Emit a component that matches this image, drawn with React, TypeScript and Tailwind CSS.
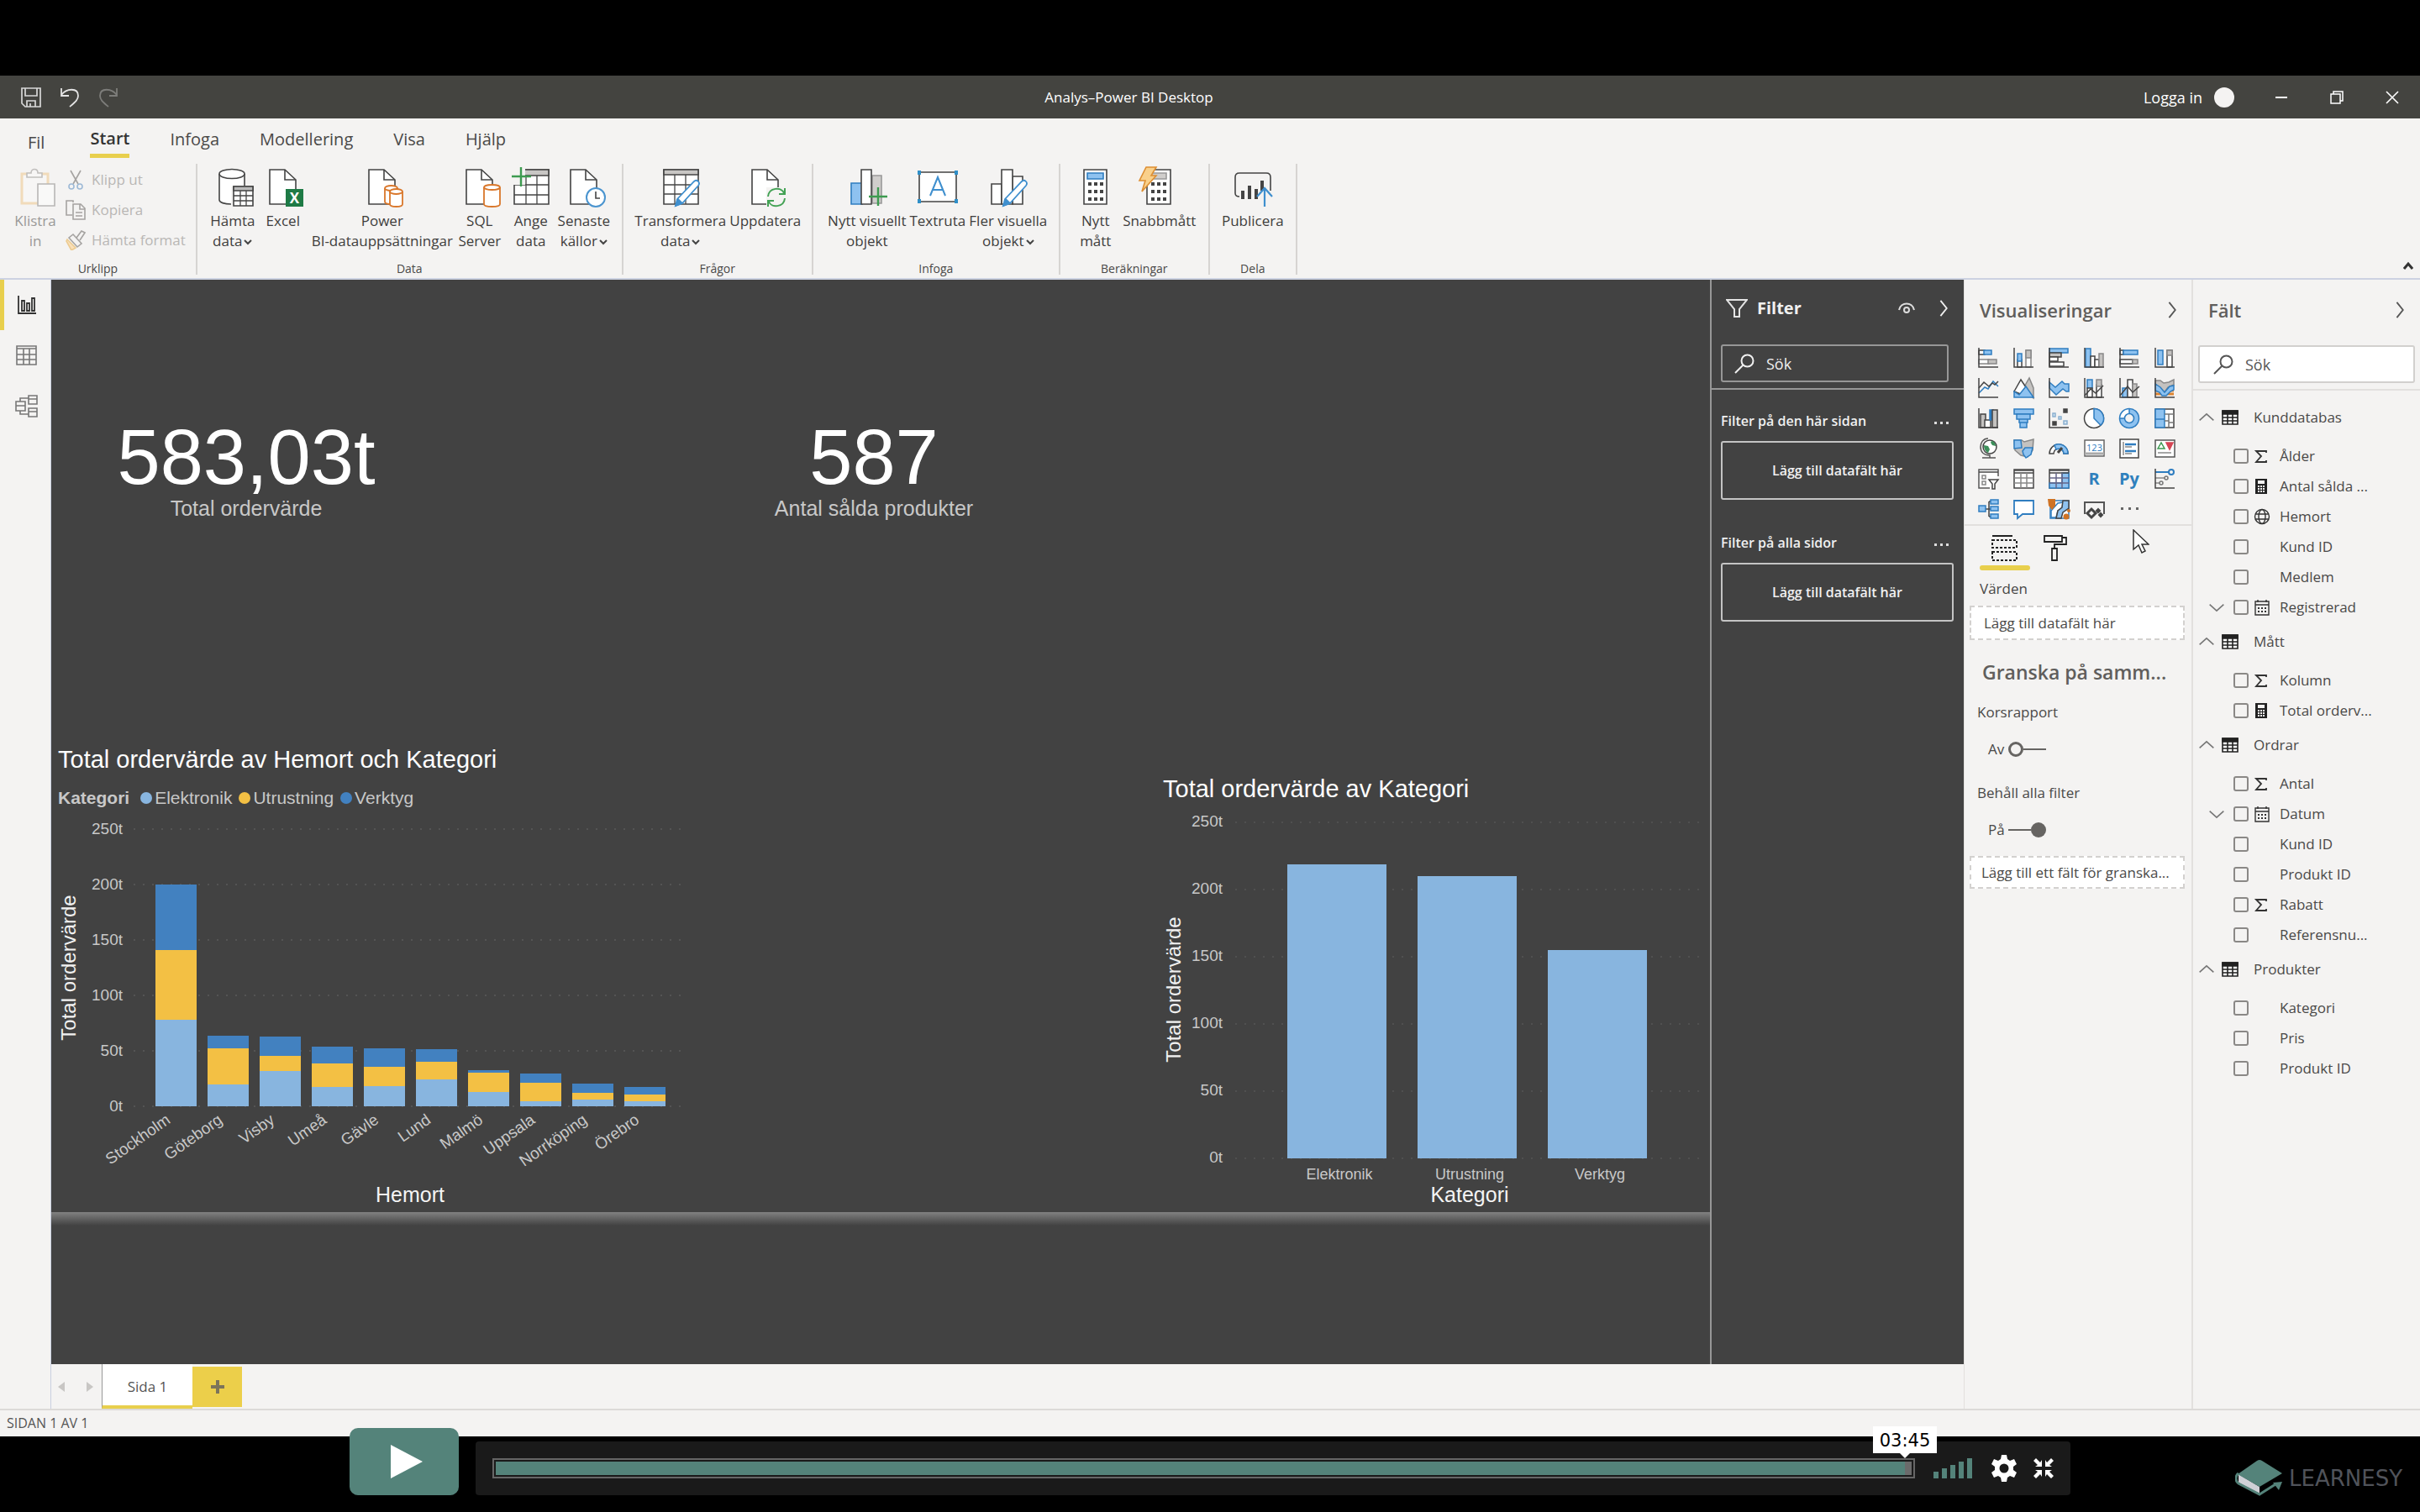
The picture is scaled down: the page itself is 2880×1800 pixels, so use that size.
import React from "react";
import type { ReactNode } from "react";

const INK = "#444444";
const BLUE = "#2f7dc0";
const SKY = "#8ec2f0";
const GREY = "#c4c2c0";

/* ---------- shared glyphs ---------- */

function Chevron({ dir, className }: { dir: "right" | "up" | "down"; className: string }) {
  const d = { right: "M7 2l8 10-8 10", up: "M2 16L12 7l10 9", down: "M2 8l10 9 10-9" }[dir];
  return (
    <svg viewBox="0 0 24 24" className={className} fill="none" stroke="currentColor" strokeWidth="2" aria-hidden="true">
      <path d={d} />
    </svg>
  );
}

function Caret() {
  return (
    <svg viewBox="0 0 10 10" className="ml-0.5 inline-block h-2.5 w-2.5" fill="none" stroke="#444" strokeWidth="2" aria-hidden="true">
      <path d="M1 3l4 4 4-4" />
    </svg>
  );
}

function SearchGlyph() {
  return (
    <svg viewBox="0 0 24 24" className="h-6 w-6 shrink-0" fill="none" stroke="currentColor" strokeWidth="2" aria-hidden="true">
      <circle cx="15.500" cy="8.500" r="7" />
      <path d="M10.500 13.500L1 23" />
    </svg>
  );
}

/* ---------- ribbon icons ---------- */

function Big({ children }: { children: ReactNode }) {
  return (
    <svg viewBox="0 0 48 48" className="h-12 w-12 overflow-visible" fill="none" stroke={INK} strokeWidth="1.6" aria-hidden="true">
      {children}
    </svg>
  );
}

const Doc = () => (
  <>
    <path d="M8 4h18l13 12v29H8z" fill="#fff" stroke={INK} />
    <path d="M26 4v12h13" />
  </>
);

const PasteIcon = () => (
  <Big>
    <path d="M8 9h31v35H8z" stroke="#f0c584" strokeWidth="3" fill="#fbfaf8" />
    <path d="M14 13V8h5c0-6 8-6 8 0h5v5z" stroke="#8f8d8b" fill="#fbfaf8" />
    <path d="M27 21h20v26H27z" stroke="#7f7d7b" fill="#fff" />
  </Big>
);

const GetDataIcon = () => (
  <Big>
    <path d="M8 9v31c0 3 6 5 14 5V24h16V9z" fill="#fff" stroke="none" />
    <path d="M8 9v31c0 3 6 5 14 5M38 9v14" />
    <ellipse cx="23" cy="9" rx="15" ry="5.500" fill="#fff" />
    <path d="M25 24h23v23H25z" fill="#fff" />
    <path d="M25 24h23v5H25z" fill="#bbb" />
    <path d="M25 35h23M25 41h23M33 29v18M40 29v18" strokeWidth="1.3" />
  </Big>
);

const ExcelIcon = () => (
  <Big>
    <Doc />
    <path d="M27 27h21v21H27z" fill="#1e7a45" stroke="none" />
    <text x="37.500" y="43.500" fill="#fff" stroke="none" fontSize="17" fontWeight="700" textAnchor="middle">X</text>
  </Big>
);

const Cyl = ({ x, y, w, h }: { x: number; y: number; w: number; h: number }) => (
  <g stroke="#d9772b" fill="#fff" strokeWidth="1.8">
    <path d={`M${x} ${y}v${h}c0 4 ${w} 4 ${w} 0v-${h}`} />
    <ellipse cx={x + w / 2} cy={y} rx={w / 2} ry="3" />
  </g>
);

const DatasetIcon = () => (
  <Big>
    <Doc />
    <Cyl x={27} y={26} w={15} h={16} />
    <Cyl x={33} y={30} w={15} h={15} />
  </Big>
);

const SqlIcon = () => (
  <Big>
    <Doc />
    <Cyl x={29} y={25} w={19} h={20} />
  </Big>
);

const EnterDataIcon = () => (
  <Big>
    <path d="M4 4h41v41H4z" fill="#fff" />
    <path d="M4 4h41v7H4z" fill="#c8c6c4" />
    <path d="M4 22h41M4 34h41M18 11v34M31 11v34" strokeWidth="1.3" />
    <path d="M-1 3h18v19H-1z" fill="#f4f3f2" stroke="none" />
    <path d="M1 12h23M12 1v23" stroke="#3d9b50" strokeWidth="2.400" />
  </Big>
);

const RecentIcon = () => (
  <Big>
    <Doc />
    <circle cx="38" cy="37" r="11" fill="#fff" stroke="#4a94cf" strokeWidth="2" />
    <path d="M38 30v8h5" />
  </Big>
);

const Pencil = () => (
  <g>
    <path d="M20 39L40 18c3-3 8 1 5 5L26 44l-8 3z" fill="#fff" stroke="#3f8fce" strokeWidth="1.800" />
    <path d="M18 47l3-8 5 5z" fill="#3f8fce" stroke="#3f8fce" />
  </g>
);

const TransformIcon = () => (
  <Big>
    <path d="M4 4h41v41H4z" fill="#fff" />
    <path d="M4 4h41v6H4z" fill="#c8c6c4" />
    <path d="M4 22h41M4 33h41M17 10v35M30 10v35" strokeWidth="1.3" />
    <Pencil />
  </Big>
);

const RefreshIcon = () => (
  <Big>
    <Doc />
    <rect x="25" y="25" width="23" height="23" fill="#f4f3f2" stroke="none" />
    <g stroke="#43a255" strokeWidth="2">
      <path d="M27 36c1-11 16-12 19-4M47 26v7h-7" />
      <path d="M47 38c-1 11-16 12-19 4M27 48v-7h7" />
    </g>
  </Big>
);

const NewVisualIcon = () => (
  <Big>
    <path d="M30 11h11v33H30z" fill="#d0cecc" stroke="#999" />
    <path d="M5 20h13v25H5z" fill={SKY} stroke={BLUE} />
    <path d="M17 4h12v41H17z" fill="#fff" />
    <path d="M26 36h22M37 25v22" stroke="#3d9b50" strokeWidth="2.400" />
  </Big>
);

const TextBoxIcon = () => (
  <Big>
    <path d="M2 7h44v35H2z" fill="#fff" />
    <g fill="#2f8fc8" stroke="none">
      <path d="M0 5h4v5H0zM44 5h4v5h-4zM0 39h4v5H0zM44 39h4v5h-4z" />
    </g>
    <path d="M15 35L24 13l9 22M18 28h12" stroke="#3f8fce" strokeWidth="2" />
  </Big>
);

const MoreVisualsIcon = () => (
  <Big>
    <path d="M29 12h12v33H29z" fill="#fff" />
    <path d="M4 21h12v24H4z" fill="#fff" />
    <path d="M16 4h13v41H16z" fill="#fff" />
    <Pencil />
  </Big>
);

const Keys = ({ x }: { x: number }) => (
  <g fill={INK} stroke="none">
    {[19, 28, 37].map((y) =>
      [0, 7, 14].map((dx) => <rect key={`${y}-${dx}`} x={x + dx} y={y} width="4" height="4" />)
    )}
  </g>
);

const MeasureIcon = () => (
  <Big>
    <path d="M10 4h27v41H10z" fill="#fff" />
    <path d="M14 8h19v7H14z" fill={SKY} stroke={BLUE} />
    <Keys x={15} />
  </Big>
);

const QuickMeasureIcon = () => (
  <Big>
    <path d="M9 4h28v41H9z" fill="#fff" />
    <path d="M14 8h18v7H14z" fill="#d0cecc" stroke="#999" />
    <Keys x={14} />
    <path d="M8 1h12l-6 10h6L3 30l4-13H0z" fill="#f9d08b" stroke="#dd8f33" />
  </Big>
);

const PublishIcon = () => (
  <Big>
    <path d="M8 36c-3 0-5-1-5-4V13c0-3 2-5 5-5h32c3 0 5 2 5 5v16" fill="none" />
    <path d="M12 29v10M20 23v16M28 27v12M35 17v12" strokeWidth="4" />
    <path d="M38 48V27M29 36l9-10 9 10" stroke="#3f8fce" strokeWidth="2.200" />
  </Big>
);

/* ---------- visualisation gallery ---------- */

const axes = <path d="M1 0v23h23" stroke={INK} />;

function Viz({ name, children }: { name: string; children: ReactNode }) {
  return (
    <button aria-label={name} className="flex h-6 w-6 items-center justify-center">
      <svg viewBox="0 0 24 24" className="h-6 w-6 overflow-visible" fill="none" stroke={INK} strokeWidth="1.5" aria-hidden="true">
        {children}
      </svg>
    </button>
  );
}

function VizGallery() {
  return (
    <div className="grid grid-cols-[repeat(6,24px)] gap-x-[18px] gap-y-3 px-4">
      <Viz name="Staplat liggande diagram">
        <path d="M1 3h7v5H1z" fill="#fff" /><path d="M7 3h9v5H7z" fill={SKY} stroke={BLUE} />
        <path d="M1 14h12v5H1z" fill="#fff" stroke="#888" /><path d="M12 14h10v5H12z" fill={GREY} stroke="#888" />{axes}
      </Viz>
      <Viz name="Staplat stapeldiagram">
        <path d="M5 14h5v9H5z" fill="#fff" /><path d="M5 7h5v9H5z" fill={SKY} stroke={BLUE} />
        <path d="M15 3h6v20h-6z" fill="#fff" stroke="#888" /><path d="M15 3h6v9h-6z" fill={GREY} stroke="#888" />{axes}
      </Viz>
      <Viz name="Grupperat liggande diagram">
        <path d="M1 1h22v5H1z" fill={SKY} stroke={BLUE} /><path d="M1 6h14v5H1z" fill={GREY} />
        <path d="M1 11h10v5H1z" fill="#fff" /><path d="M1 17h17v5H1z" fill="#fff" />{axes}
      </Viz>
      <Viz name="Grupperat stapeldiagram">
        <path d="M2 1h6v22H2z" fill={SKY} stroke={BLUE} /><path d="M8 10h5v13H8z" fill="#fff" />
        <path d="M13 14h5v9h-5z" fill="#fff" /><path d="M18 7h5v16h-5z" fill={GREY} stroke="#888" />{axes}
      </Viz>
      <Viz name="100 % staplat liggande diagram">
        <path d="M1 3h4v5H1z" fill="#fff" /><path d="M5 3h17v5H5z" fill={SKY} stroke={BLUE} />
        <path d="M1 14h15v5H1z" fill="#fff" /><path d="M16 14h6v5h-6z" fill={GREY} stroke="#888" />{axes}
      </Viz>
      <Viz name="100 % staplat stapeldiagram">
        <path d="M4 3h6v17H4z" fill={SKY} stroke={BLUE} /><path d="M15 3h6v20h-6z" fill="#fff" />
        <path d="M15 3h6v6h-6z" fill={GREY} stroke="#888" />{axes}
      </Viz>

      <Viz name="Linjediagram">
        <path d="M1 18l7-7 4 2 6-9 6 6" stroke={BLUE} /><path d="M1 12l6-7 6 5 4-4 3 2 4-4" />{axes}
      </Viz>
      <Viz name="Ytdiagram">
        <path d="M11 14l8-14 5 12v12z" fill={GREY} stroke="#888" /><path d="M1 16L9 2l8 12-6 6z" fill="#fff" />
        <path d="M1 16l6 4 8-10 9 13H1z" fill={SKY} stroke={BLUE} />
      </Viz>
      <Viz name="Staplat ytdiagram">
        <path d="M1 5l7 6 8-7 3 3h5v9h-3l-4-3-8 7-8-8z" fill={SKY} stroke={BLUE} />{axes}
      </Viz>
      <Viz name="Linje- och staplat stapeldiagram">
        <path d="M4 2h6v10H4z" fill={SKY} stroke={BLUE} /><path d="M4 12h6v11H4zM15 8h6v15h-6z" fill="#fff" />
        <path d="M15 2h6v8h-6z" fill={GREY} stroke="#888" /><path d="M1 21l7-8 6 5 9-9" />{axes}
      </Viz>
      <Viz name="Linje- och grupperat stapeldiagram">
        <path d="M4 12h6v11H4z" fill={SKY} stroke={BLUE} /><path d="M10 2h6v21h-6z" fill="#fff" />
        <path d="M16 7h5v16h-5z" fill={GREY} stroke="#888" /><path d="M1 21l9-11 6 7 8-7" />{axes}
      </Viz>
      <Viz name="Menyfliksdiagram">
        <path d="M1 15h22M1 19h22" stroke="#dd8430" strokeWidth="3" />
        <path d="M1 3h6l4 3 6-1 6-3v6l-7 3-4 6-5-4-6-5z" fill={GREY} stroke="#888" />
        <path d="M1 7l6 4 5 6 6-7 5-1v5l-4 2-5 5H9l-3-4-5-2z" fill={SKY} stroke={BLUE} />{axes}
      </Viz>

      <Viz name="Vattenfallsdiagram">
        <path d="M3 7h6v16H3z" fill={GREY} /><path d="M8 14h7v9H8z" fill="#fff" />
        <path d="M14 2h4v12h-4z" fill={BLUE} stroke={BLUE} /><path d="M17 2h6v21h-6z" fill={GREY} />{axes}
      </Viz>
      <Viz name="Tratt">
        <g fill={SKY} stroke={BLUE}><path d="M1 1h23v6H1z" /><path d="M4 7h16v6H4zM7 13h10v4H7zM8 17h8v6H8z" /></g>
      </Viz>
      <Viz name="Punktdiagram">
        <path d="M18 1h4v4h-4zM5 16h4v4H5z" fill={INK} />
        <path d="M5 6h3v4H5zM12 10h3v3h-3zM18 15h4v4h-4z" fill="#d5e5f3" stroke="#8ab0d0" />{axes}
      </Viz>
      <Viz name="Cirkeldiagram">
        <circle cx="12" cy="12" r="11.500" fill="#fff" />
        <path d="M12 .5a11.500 11.500 0 018 19.800L12 12z" fill={SKY} stroke={BLUE} />
      </Viz>
      <Viz name="Ringdiagram">
        <circle cx="12" cy="12" r="8.500" stroke={SKY} strokeWidth="6" />
        <path d="M3.500 12A8.500 8.500 0 0112 3.500" stroke="#fff" strokeWidth="5" />
        <circle cx="12" cy="12" r="11.500" stroke={BLUE} /><circle cx="12" cy="12" r="5.500" stroke={BLUE} />
        <path d="M12 0v6M0 12h6" stroke={BLUE} />
      </Viz>
      <Viz name="Trädkarta">
        <path d="M1 1h22v22H1z" fill="#fff" /><path d="M1 1h11v22H1z" fill={SKY} stroke={BLUE} />
        <path d="M1 13h11" stroke={BLUE} /><path d="M12 7h11M17 7v16M12 15h5M17 17h6" stroke="#777" />
      </Viz>

      <Viz name="Karta">
        <circle cx="14" cy="10" r="8" fill="#fff" /><path d="M16 3c3 0 5 3 5 6l-4-1-2-3zM7 8l5 1 2 4-2 4c-4-2-5-5-5-9z" fill="#3c8f5a" stroke="none" />
        <path d="M12 0C6 0 3 5 3 10c0 6 4 10 11 10v3M5 23h16" stroke="#555" />
      </Viz>
      <Viz name="Koropletkarta">
        <path d="M1 2h9l3 2 11-3-1 13-6 8-8-2-7-6z" fill={GREY} stroke="#888" />
        <path d="M1 2h8l1 9-9 1zM14 11h9l-2 8-6 4-3-4-1-4z" fill={SKY} stroke={BLUE} />
      </Viz>
      <Viz name="Mätare">
        <path d="M1 18a11 11 0 0122 0h-5a6 6 0 00-12 0z" fill="#fff" />
        <path d="M7 8a11 11 0 0116 10h-5a6 6 0 00-9-5z" fill={SKY} stroke={BLUE} /><path d="M11 17l5-6" strokeWidth="3" />
      </Viz>
      <Viz name="Kort">
        <path d="M1 2h23v19H1z" fill="#fff" stroke="#666" /><path d="M1 18h23" stroke="#aaa" strokeWidth="3" />
        <text x="12.500" y="15" fontSize="11" fill={BLUE} stroke="none" textAnchor="middle">123</text>
      </Viz>
      <Viz name="Kort med flera rader">
        <path d="M1 1h22v22H1z" fill="#fff" /><path d="M5 4v16" stroke="#888" />
        <path d="M7 7h13M7 15h13" stroke={BLUE} strokeWidth="2.500" /><path d="M7 10h8M7 18h8" stroke="#888" />
      </Viz>
      <Viz name="KPI">
        <path d="M1 2h23v20H1z" fill="#fff" stroke="#555" /><path d="M4 12l4-7 4 7z" stroke="#3c9a50" />
        <path d="M14 5h8l-4 8z" fill="#d64554" stroke="#d64554" /><path d="M4 17h16" stroke="#888" />
      </Viz>

      <Viz name="Utsnitt">
        <path d="M24 9V1H1v22h13" fill="#fff" stroke="#555" /><path d="M1 4h23" /><path d="M5 8h4v4H5zM5 15h4v4H5z" stroke="#888" />
        <path d="M13 13h11l-4 5v6h-3v-6z" fill="#fff" />
      </Viz>
      <Viz name="Tabell">
        <path d="M1 1h23v22H1z" fill="#fff" /><path d="M1 2h23M1 5h23" /><path d="M1 11h23M1 17h23M9 5v18M16 5v18" stroke="#888" />
      </Viz>
      <Viz name="Matris">
        <path d="M1 1h23v22H1z" fill="#fff" /><path d="M16 5h8v18H1v-6h15z" fill={SKY} stroke={BLUE} />
        <path d="M1 2h23M1 5h23" /><path d="M1 11h23M1 17h23M9 5v18M16 5v18" stroke="#668" />
      </Viz>
      <button className="flex h-6 w-6 items-center justify-center text-xl leading-6 font-bold text-[#2f80bd]">R</button>
      <button className="flex h-6 w-6 items-center justify-center text-xl leading-6 font-bold text-[#2f80bd]">Py</button>
      <Viz name="Viktiga påverkare">
        <path d="M1 4h16" stroke={BLUE} strokeWidth="2" /><circle cx="20" cy="4" r="3" stroke={BLUE} strokeWidth="2" />
        <path d="M1 11h11M1 17h5" stroke="#888" /><circle cx="14" cy="11" r="2" stroke="#777" /><circle cx="8" cy="17" r="2" stroke="#777" />{axes}
      </Viz>

      <Viz name="Uppdelningsträd">
        <path d="M9 12h4M13 3v18M13 3h3M13 12h3M13 21h3" />
        <g fill={SKY} stroke={BLUE}><path d="M1 8h8v7H1zM15 1h9v5h-9zM15 9h9v5h-9zM15 18h9v5h-9z" /></g>
      </Viz>
      <Viz name="Frågor och svar">
        <path d="M1 2h23v16H11l-6 5v-5H1z" fill="#fff" stroke={BLUE} strokeWidth="1.800" />
      </Viz>
      <Viz name="ArcGIS-karta">
        <path d="M2 2h22v21H2z" fill="#fff" stroke={BLUE} /><path d="M11 5l6-1-1 7-5 3-2 8H3v-8z" stroke={BLUE} fill="#fff" />
        <path d="M24 2h-7l-1 8-5 4-2 9h6l2-7 7-5z" fill={SKY} />
        <path d="M-1 0h9v8l-4 5-4-5z" fill="#cf7325" stroke="none" /><circle cx="21" cy="21" r="3.500" fill="#cf7325" stroke="none" />
        <circle cx="24" cy="14" r="2" fill="#cf7325" stroke="none" />
      </Viz>
      <Viz name="Power Apps">
        <path d="M1 18V4h23v14" stroke="#555" strokeWidth="2" /><path d="M9 12l5 5-5 5-5-5z" strokeWidth="3" />
        <path d="M17 12l2 2-2 2-2-2zM20 17l2 2-2 2-2-2z" strokeWidth="2" fill={INK} />
      </Viz>
      <Viz name="Fler visuella objekt">
        <path d="M2 10h3v3H2zM11 10h3v3h-3zM20 10h3v3h-3z" fill="#666" stroke="none" />
      </Viz>
    </div>
  );
}

/* ---------- title bar and ribbon ---------- */

function TitleBar() {
  return (
    <header className="grid h-[51px] shrink-0 grid-cols-[1fr_auto_1fr] items-center bg-[#444440] text-white">
      <div className="flex items-center gap-[22px] pl-[25px]">
        <button aria-label="Spara">
          <svg viewBox="0 0 24 24" className="h-6 w-6" fill="none" stroke="#d8d8d8" strokeWidth="1.700"><path d="M1 1h22v22H5l-4-4zM5 1v9h14V1M7 23v-7h10v7M11 23v-4" /></svg>
        </button>
        <button aria-label="Ångra">
          <svg viewBox="0 0 24 24" className="h-6 w-6" fill="none" stroke="#e4e4e4" strokeWidth="1.800"><path d="M2 1v9h9M2 9c6-8 20-9 20 1 0 5-4 8-10 13" /></svg>
        </button>
        <button aria-label="Gör om">
          <svg viewBox="0 0 24 24" className="h-6 w-6" fill="none" stroke="#7d7d7a" strokeWidth="1.800"><path d="M22 1v9h-9M22 9C16 1 2 0 2 10c0 5 4 8 10 13" /></svg>
        </button>
      </div>
      <h1 className="pr-[193px] text-[17px] leading-6">Analys–Power BI Desktop</h1>
      <div className="flex items-center justify-end pr-[25px]">
        <button className="flex items-center gap-3.5 text-lg leading-6">
          Logga in
          <span className="h-6 w-6 rounded-full bg-[#f4f3f2]" />
        </button>
        <button aria-label="Minimera" className="ml-12 h-4 w-4">
          <svg viewBox="0 0 16 16" className="h-4 w-4" stroke="#fff" strokeWidth="2"><path d="M1 8h14" /></svg>
        </button>
        <button aria-label="Återställ" className="ml-[50px] h-4 w-4">
          <svg viewBox="0 0 16 16" className="h-4 w-4" stroke="#fff" strokeWidth="1.500" fill="none"><path d="M1 4h11v11H1zM4 4V1h11v11h-3" /></svg>
        </button>
        <button aria-label="Stäng" className="ml-[50px] h-4 w-4">
          <svg viewBox="0 0 16 16" className="h-4 w-4" stroke="#fff" strokeWidth="1.600"><path d="M1 1l14 14M15 1L1 15" /></svg>
        </button>
      </div>
    </header>
  );
}

function Tool({ icon, lines, width, caret }: { icon: ReactNode; lines: string[]; width: string; caret?: boolean }) {
  return (
    <button className={`${width} flex flex-col items-center pt-[3px] text-[17px] leading-6 whitespace-nowrap text-[#3f3e3d]`}>
      {icon}
      <span className="mt-[5px] flex flex-col items-center">
        {lines.map((line, i) => (
          <span key={line} className="block">
            {line}
            {caret && i === lines.length - 1 ? <Caret /> : null}
          </span>
        ))}
      </span>
    </button>
  );
}

function Group({ title, pad, children }: { title: string; pad: string; children: ReactNode }) {
  return (
    <section aria-label={title} className="flex h-[132px] flex-col justify-between border-r-2 border-[#d6d4d2]">
      <div className={`${pad} flex items-start`}>{children}</div>
      <p className="text-center text-sm leading-[14px] text-[#4a4948]">{title}</p>
    </section>
  );
}

function SmallTool({ label, children }: { label: string; children: ReactNode }) {
  return (
    <button className="flex h-9 items-center gap-[7px] text-[17px] leading-6 whitespace-nowrap text-[#b9b7b5]">
      <svg viewBox="0 0 24 24" className="h-6 w-6" fill="none" stroke="#a5a3a1" strokeWidth="1.600" aria-hidden="true">{children}</svg>
      {label}
    </button>
  );
}

function Ribbon() {
  const tabs = ["Start", "Infoga", "Modellering", "Visa", "Hjälp"];
  return (
    <div className="flex h-[190px] shrink-0 flex-col bg-[#f4f3f2]">
      <nav className="flex h-[54px] items-start pl-[33px] text-xl leading-7 text-[#4a4948]">
        <button className="mr-[30px] flex h-[58px] items-center">Fil</button>
        {tabs.map((t) => (
          <button key={t} className="px-6">
            <span className={t === "Start" ? "flex h-[47px] items-center border-b-[5px] border-[#e8cf4d] pt-1.5 font-semibold text-[#333]" : "flex h-[47px] items-center pt-0.5"}>{t}</span>
          </button>
        ))}
      </nav>
      <div className="flex items-start">
        <Group title="Urklipp" pad="pl-3 pr-3">
          <div className="opacity-50">
            <Tool icon={<PasteIcon />} lines={["Klistra", "in"]} width="w-[60px]" />
          </div>
          <div className="flex flex-col pt-px pl-1.5">
            <SmallTool label="Klipp ut">
              <path d="M6 1l9 16M18 1L9 17" /><circle cx="7" cy="20" r="3" stroke="#9db9d6" /><circle cx="17" cy="20" r="3" stroke="#9db9d6" />
            </SmallTool>
            <SmallTool label="Kopiera">
              <path d="M9 3V1H1v17h7" /><path d="M9 5h9l5 5v13H9zM17 5v6h6M12 15h8M12 19h8" />
            </SmallTool>
            <SmallTool label="Hämta format">
              <path d="M2 11l10 10-5 3-6-11z" fill="#fae0b8" stroke="#eccb92" /><path d="M4 9l10 11 5-4L9 5zM13 9l6-8 4 2-6 9" fill="#f4f3f2" />
            </SmallTool>
          </div>
        </Group>
        <Group title="Data" pad="pl-[13px] pr-3.5">
          <Tool icon={<GetDataIcon />} lines={["Hämta", "data"]} width="w-[58px]" caret />
          <Tool icon={<ExcelIcon />} lines={["Excel"]} width="w-[62px]" />
          <Tool icon={<DatasetIcon />} lines={["Power", "BI-datauppsättningar"]} width="w-[174px]" />
          <Tool icon={<SqlIcon />} lines={["SQL", "Server"]} width="w-[58px]" />
          <Tool icon={<EnterDataIcon />} lines={["Ange", "data"]} width="w-16" />
          <Tool icon={<RecentIcon />} lines={["Senaste", "källor"]} width="w-[62px]" caret />
        </Group>
        <Group title="Frågor" pad="pl-3.5 pr-2">
          <Tool icon={<TransformIcon />} lines={["Transformera", "data"]} width="w-[108px]" caret />
          <Tool icon={<RefreshIcon />} lines={["Uppdatera"]} width="w-[94px]" />
        </Group>
        <Group title="Infoga" pad="pl-3 pr-2">
          <Tool icon={<NewVisualIcon />} lines={["Nytt visuellt", "objekt"]} width="w-[104px]" />
          <Tool icon={<TextBoxIcon />} lines={["Textruta"]} width="w-16" />
          <Tool icon={<MoreVisualsIcon />} lines={["Fler visuella", "objekt"]} width="w-[104px]" caret />
        </Group>
        <Group title="Beräkningar" pad="px-3">
          <Tool icon={<MeasureIcon />} lines={["Nytt", "mått"]} width="w-[60px]" />
          <Tool icon={<QuickMeasureIcon />} lines={["Snabbmått"]} width="w-[92px]" />
        </Group>
        <Group title="Dela" pad="px-[11px]">
          <Tool icon={<PublishIcon />} lines={["Publicera"]} width="w-20" />
        </Group>
        <button aria-label="Dölj menyfliksområdet" className="mr-2 ml-auto self-end text-[#333]">
          <svg viewBox="0 0 12 12" className="mb-1 h-3 w-3" fill="none" stroke="currentColor" strokeWidth="3"><path d="M1 9l5-6 5 6" /></svg>
        </button>
      </div>
    </div>
  );
}

/* ---------- left rail ---------- */

function Rail() {
  return (
    <nav className="flex w-[61px] shrink-0 flex-col border-r border-[#c9cfe0] bg-[#f4f3f2]">
      <button aria-label="Rapport" className="flex h-[60px] items-center border-l-[5px] border-[#e8cf4d] pl-4">
        <svg viewBox="0 0 22 22" className="h-[22px] w-[22px]" fill="none" stroke="#333" strokeWidth="1.800"><path d="M1 0v21h21M5 6h3v12H5zM11 9h3v9h-3zM17 3h3v15h-3z" /></svg>
      </button>
      <button aria-label="Data" className="flex h-[60px] items-center pl-[19px]">
        <svg viewBox="0 0 25 24" className="h-6 w-[25px]" fill="none" stroke="#777" strokeWidth="1.600"><path d="M1 1h23v22H1zM1 4h23M1 11h23M1 17h23M9 4v19M16 4v19" /></svg>
      </button>
      <button aria-label="Modell" className="flex h-[60px] items-center pl-[18px]">
        <svg viewBox="0 0 27 27" className="h-[27px] w-[27px]" fill="none" stroke="#777" strokeWidth="1.600"><path d="M1 8h11v11H1zM1 13h11M16 1h10v10H16zM16 5h10M16 16h10v10H16zM16 20h10M6 8V4h10M6 19v4h10" /></svg>
      </button>
    </nav>
  );
}

/* ---------- report canvas ---------- */

const cities: [string, number, number, number][] = [
  ["Stockholm", 103, 83, 78],
  ["Göteborg", 26, 43, 15],
  ["Visby", 42, 18, 23],
  ["Umeå", 23, 28, 20],
  ["Gävle", 24, 23, 22],
  ["Lund", 32, 21, 15],
  ["Malmö", 17, 23, 3],
  ["Uppsala", 6, 22, 11],
  ["Norrköping", 8, 8, 11],
  ["Örebro", 6, 8, 9],
];

const ticks = ["0t", "50t", "100t", "150t", "200t", "250t"];

function StackedChart() {
  const base = 354;
  return (
    <figure className="flex w-[760px] flex-col">
      <figcaption className="pl-2 text-[29px] leading-8 text-white">Total ordervärde av Hemort och Kategori</figcaption>
      <div className="mt-[18px] mb-px flex h-6 items-center pl-2 text-[21px] leading-6 text-[#c8c8c8]">
        <b className="mr-[13px]">Kategori</b>
        <span className="mr-[3px] h-3.5 w-3.5 rounded-full bg-[#88b5df]" />Elektronik
        <span className="mr-[3px] ml-2 h-3.5 w-3.5 rounded-full bg-[#f3c044]" />Utrustning
        <span className="mr-[3px] ml-2 h-3.5 w-3.5 rounded-full bg-[#4281c0]" />Verktyg
      </div>
      <svg viewBox="0 0 760 480" className="h-[480px] w-[760px]" fontFamily="Liberation Sans, Arial, sans-serif">
        {ticks.map((t, i) => (
          <g key={t}>
            <line x1="98" x2="750" y1={base - i * 66} y2={base - i * 66} stroke="#545454" strokeWidth="2" strokeDasharray="2 9" />
            <text x="85" y={base + 6 - i * 66} textAnchor="end" fontSize="19" fill="#c8c8c8">{t}</text>
          </g>
        ))}
        {cities.map(([name, light, yellow, blue], i) => {
          const x = 124 + i * 62;
          return (
            <g key={name}>
              <rect x={x} y={base - light} width="49" height={light} fill="#88b5df" />
              <rect x={x} y={base - light - yellow} width="49" height={yellow} fill="#f3c044" />
              <rect x={x} y={base - light - yellow - blue} width="49" height={blue} fill="#4281c0" />
              <text transform={`translate(${x + 19} 373) rotate(-35)`} textAnchor="end" fontSize="19" fill="#c8c8c8">{name}</text>
            </g>
          );
        })}
        <text transform="translate(29 189) rotate(-90)" textAnchor="middle" fontSize="24" fill="#f0f0f0">Total ordervärde</text>
        <text x="427" y="468" textAnchor="middle" fontSize="25" fill="#f4f4f4">Hemort</text>
      </svg>
    </figure>
  );
}

function CategoryChart() {
  const base = 424;
  const bars: [string, number][] = [["Elektronik", 350], ["Utrustning", 336], ["Verktyg", 248]];
  return (
    <figure className="ml-auto flex w-[655px] flex-col">
      <figcaption className="pl-1 text-[29px] leading-8 text-white">Total ordervärde av Kategori</figcaption>
      <svg viewBox="0 0 655 488" className="h-[488px] w-[655px]" fontFamily="Liberation Sans, Arial, sans-serif">
        {ticks.map((t, i) => (
          <g key={t}>
            <line x1="90" x2="648" y1={base - i * 80} y2={base - i * 80} stroke="#505050" strokeWidth="2" strokeDasharray="2 9" />
            <text x="75" y={base + 5 - i * 80} textAnchor="end" fontSize="19" fill="#c8c8c8">{t}</text>
          </g>
        ))}
        {bars.map(([name, h], i) => (
          <g key={name}>
            <rect x={152 + i * 155} y={base - h} width="118" height={h} fill="#88b5df" />
            <text x={214 + i * 155} y="449" textAnchor="middle" fontSize="18" fill="#c8c8c8">{name}</text>
          </g>
        ))}
        <text transform="translate(25 223) rotate(-90)" textAnchor="middle" fontSize="24" fill="#f0f0f0">Total ordervärde</text>
        <text x="369" y="476" textAnchor="middle" fontSize="25" fill="#f4f4f4">Kategori</text>
      </svg>
    </figure>
  );
}

function Card({ value, label }: { value: string; label: string }) {
  return (
    <div className="flex w-[464px] flex-col items-center">
      <span className="text-[92px] leading-[92px] text-white">{value}</span>
      <span className="mt-px text-[25px] leading-7 text-[#c8c8c8]">{label}</span>
    </div>
  );
}

function Canvas() {
  return (
    <main className="flex min-w-0 flex-1 flex-col bg-[#424242] font-['Liberation_Sans',Arial,sans-serif]">
      <div className="flex flex-1 flex-col justify-between pt-[165px]">
        <div className="flex gap-[283px]">
          <Card value="583,03t" label="Total ordervärde" />
          <Card value="587" label="Antal sålda produkter" />
        </div>
        <div className="flex items-end">
          <StackedChart />
          <CategoryChart />
        </div>
      </div>
      <div className="h-[181px] shrink-0">
        <div className="h-4 bg-linear-to-b from-[#828282] to-[#424242]" />
      </div>
    </main>
  );
}

/* ---------- filter pane ---------- */

function FilterSection({ title }: { title: string }) {
  return (
    <section className="mb-[39px] pr-3 pl-[11px]">
      <div className="flex h-6 items-center justify-between pr-1.5">
        <h3 className="text-base leading-6 font-semibold">{title}</h3>
        <button aria-label="Fler alternativ" className="flex gap-1 pt-1">
          <i className="h-[3px] w-[3px] bg-[#ddd]" />
          <i className="h-[3px] w-[3px] bg-[#ddd]" />
          <i className="h-[3px] w-[3px] bg-[#ddd]" />
        </button>
      </div>
      <button className="mt-3 flex h-[70px] w-full items-center justify-center rounded-[3px] border-2 border-[#c4c4c4] text-base leading-6 font-semibold">
        Lägg till datafält här
      </button>
    </section>
  );
}

function FilterPane() {
  return (
    <aside className="w-[302px] shrink-0 border-l-2 border-[#979797] bg-[#424242] text-[#f0f0f0]">
      <div className="flex h-[67px] items-center pr-3 pl-[17px]">
        <svg viewBox="0 0 26 24" className="h-6 w-[26px]" fill="none" stroke="#e4e4e4" strokeWidth="2" aria-hidden="true"><path d="M1 2h24L16 13v9h-6v-9z" /></svg>
        <h2 className="ml-[11px] text-xl leading-7 font-bold">Filter</h2>
        <button aria-label="Visa" className="ml-auto">
          <svg viewBox="0 0 20 14" className="h-3.5 w-5" fill="none" stroke="#ddd" strokeWidth="2"><path d="M1 9C3-1 17-1 19 9" /><circle cx="10" cy="9" r="3" /></svg>
        </button>
        <button aria-label="Dölj" className="ml-6"><Chevron dir="right" className="h-[22px] w-[22px]" /></button>
      </div>
      <div className="border-b-2 border-[#979797] pt-2.5 pr-[18px] pb-[7px] pl-[11px]">
        <label className="flex h-[45px] items-center gap-3.5 rounded-[3px] border-2 border-[#979797] pl-3.5 text-[#f0f0f0]">
          <SearchGlyph />
          <input type="search" aria-label="Sök filter" placeholder="Sök" className="w-full min-w-0 bg-transparent text-lg leading-6 placeholder:text-[#f0f0f0]" />
        </label>
      </div>
      <div className="pt-[25px]">
        <FilterSection title="Filter på den här sidan" />
        <FilterSection title="Filter på alla sidor" />
      </div>
    </aside>
  );
}

/* ---------- visualisations pane ---------- */

function Toggle({ id, title, state, on }: { id: string; title: string; state: string; on: boolean }) {
  return (
    <div className="pl-[15px]">
      <p id={id} className="h-6">{title}</p>
      <label className="relative mt-5 flex h-6 w-fit items-center pl-[13px]">
        <input type="checkbox" role="switch" aria-labelledby={id} defaultChecked={on} className="sr-only" />
        <span className="w-6">{state}</span>
        <span className={on ? "flex flex-row-reverse items-center" : "flex items-center"}>
          <span className={on ? "h-[18px] w-[18px] rounded-full bg-[#666462]" : "h-[18px] w-[18px] rounded-full border-[3px] border-[#666462]"} />
          <span className="h-0.5 w-[27px] bg-[#666462]" />
        </span>
      </label>
    </div>
  );
}

function VizPane() {
  return (
    <aside className="w-[271px] shrink-0 border-l border-[#e2e0de] text-[17px] leading-6 text-[#4a4948]">
      <div className="flex h-[72px] items-center justify-between pr-[11px] pl-[18px]">
        <h2 className="text-[22px] leading-7 font-semibold text-[#605e5c]">Visualiseringar</h2>
        <button aria-label="Dölj" className="text-[#555]"><Chevron dir="right" className="h-[22px] w-[22px]" /></button>
      </div>
      <div className="border-b-2 border-[#e2e0de] pt-[9px] pb-1.5">
        <VizGallery />
      </div>
      <div className="relative flex pl-[18px]">
        <button aria-label="Fält" className="flex h-[53px] w-[60px] flex-col items-center justify-between pt-[11px]">
          <svg viewBox="0 0 32 32" className="h-8 w-8" fill="none" stroke="#222" strokeWidth="2"><path d="M1 1h24" /><path d="M1 6h29v9H1zM1 20h29v10H1z" strokeDasharray="3 2" /></svg>
          <span className="h-1.5 w-full rounded-full bg-[#e8cf4d]" />
        </button>
        <button aria-label="Format" className="ml-4 h-[53px]">
          <svg viewBox="0 0 28 31" className="h-[31px] w-7" fill="none" stroke="#222" strokeWidth="1.800"><path d="M1 1h21v7H1zM22 3h5v8H13v5M10 16h6v14h-6z" /></svg>
        </button>
        <svg viewBox="0 0 20 30" className="absolute top-1 left-[200px] h-[30px] w-5" fill="#fff" stroke="#333" strokeWidth="1.500" aria-hidden="true"><path d="M1 1v23l6-5 4 9 4-2-4-8h8z" /></svg>
      </div>
      <p className="mt-2.5 h-6 pl-[18px]">Värden</p>
      <button className="mt-2 ml-1.5 flex h-[41px] w-[256px] items-center border-2 border-dashed border-[#d3d1cf] bg-white pl-[15px]">Lägg till datafält här</button>
      <h2 className="mt-[22px] pl-[21px] text-[23px] leading-8 font-semibold whitespace-nowrap text-[#605e5c]">Granska på samm...</h2>
      <div className="mt-5">
        <Toggle id="cross" title="Korsrapport" state="Av" on={false} />
      </div>
      <div className="mt-7">
        <Toggle id="keep" title="Behåll alla filter" state="På" on />
      </div>
      <button className="mt-[19px] ml-1.5 flex h-[39px] w-[256px] items-center border-2 border-dashed border-[#d3d1cf] bg-white pl-3 whitespace-nowrap">Lägg till ett fält för granska...</button>
    </aside>
  );
}

/* ---------- fields pane ---------- */

type Kind = "sum" | "calc" | "globe" | "date" | "none";

const tables: { name: string; fields: [string, Kind][] }[] = [
  { name: "Kunddatabas", fields: [["Ålder", "sum"], ["Antal sålda ...", "calc"], ["Hemort", "globe"], ["Kund ID", "none"], ["Medlem", "none"], ["Registrerad", "date"]] },
  { name: "Mått", fields: [["Kolumn", "sum"], ["Total orderv...", "calc"]] },
  { name: "Ordrar", fields: [["Antal", "sum"], ["Datum", "date"], ["Kund ID", "none"], ["Produkt ID", "none"], ["Rabatt", "sum"], ["Referensnu...", "none"]] },
  { name: "Produkter", fields: [["Kategori", "none"], ["Pris", "none"], ["Produkt ID", "none"]] },
];

function KindIcon({ kind }: { kind: Kind }) {
  return (
    <svg viewBox="0 0 18 18" className="h-[18px] w-[18px] shrink-0 overflow-visible" fill="none" stroke="#333" strokeWidth="1.400" aria-hidden="true">
      {kind === "sum" && <path d="M14 5V3H2l6 6-6 7h12v-2" strokeWidth="1.800" />}
      {kind === "calc" && (
        <>
          <path d="M1 0h14v18H1z" fill="#222" stroke="none" />
          <path d="M4 2h8v4H4z" fill="#f4f3f2" stroke="none" />
          <path d="M4 8h2v2H4zM7 8h2v2H7zM10 8h2v2h-2zM4 11h2v2H4zM7 11h2v2H7zM10 11h2v2h-2zM4 14h2v2H4zM7 14h2v2H7zM10 14h2v2h-2z" fill="#f4f3f2" stroke="none" />
        </>
      )}
      {kind === "globe" && (
        <>
          <circle cx="9" cy="9" r="8.500" />
          <ellipse cx="9" cy="9" rx="4" ry="8.500" />
          <path d="M1 6h16M1 12h16" />
        </>
      )}
      {kind === "date" && (
        <>
          <path d="M1 2h16v16H1zM1 6h16M4 0v3M14 0v3" />
          <path d="M4 9h2v2H4zM8 9h2v2H8zM12 9h2v2h-2zM4 13h2v2H4zM8 13h2v2H8zM12 13h2v2h-2z" fill="#333" stroke="none" />
        </>
      )}
    </svg>
  );
}

function FieldsPane() {
  return (
    <aside className="w-[272px] shrink-0 border-l-2 border-[#e2e0de] text-[17px] leading-6 text-[#4a4948]">
      <div className="flex h-[72px] items-center justify-between pr-3 pl-[18px]">
        <h2 className="text-[22px] leading-7 font-semibold text-[#605e5c]">Fält</h2>
        <button aria-label="Dölj" className="text-[#555]"><Chevron dir="right" className="h-[22px] w-[22px]" /></button>
      </div>
      <div className="border-b-2 border-[#e2e0de] px-1.5 pt-1.5 pb-[7px]">
        <label className="flex h-[45px] items-center gap-3.5 rounded-[3px] border-2 border-[#d2d0ce] bg-white pl-4 text-[#555]">
          <SearchGlyph />
          <input type="search" aria-label="Sök fält" placeholder="Sök" className="w-full min-w-0 bg-transparent text-lg leading-6 placeholder:text-[#555]" />
        </label>
      </div>
      <div className="pt-[9px] pl-0.5">
        {tables.map((t) => (
          <section key={t.name}>
            <button className="mb-[5px] flex h-[46px] items-center pl-1 text-[#4a4948]">
              <Chevron dir="up" className="h-5 w-5 text-[#777]" />
              <svg viewBox="0 0 20 18" className="ml-2 h-[18px] w-5" fill="#fff" stroke="#222" strokeWidth="1.600" aria-hidden="true">
                <path d="M1 1h18v16H1z" />
                <path d="M1 1h18v4H1z" fill="#222" />
                <path d="M1 9h18M1 13h18M7 5v12M13 5v12" />
              </svg>
              <span className="ml-[18px]">{t.name}</span>
            </button>
            {t.fields.map(([name, kind]) => (
              <div key={name} className="flex h-9 items-center pl-4">
                {kind === "date" ? (
                  <button aria-label={`Expandera ${name}`} className="text-[#777]"><Chevron dir="down" className="h-5 w-5" /></button>
                ) : (
                  <span className="w-5" />
                )}
                <label className="flex items-center">
                  <input type="checkbox" className="ml-2.5 h-[18px] w-[18px] appearance-none rounded-[3px] border-2 border-[#8a8886]" />
                  <span className="mr-3 ml-[7px]"><KindIcon kind={kind} /></span>
                  {name}
                </label>
              </div>
            ))}
          </section>
        ))}
      </div>
    </aside>
  );
}

/* ---------- page tabs and player ---------- */

function PageTabs() {
  return (
    <div className="flex h-[53px] shrink-0 items-stretch bg-[#f4f3f2]">
      <div className="flex w-[60px] items-center justify-between pr-2.5 pl-2">
        <button aria-label="Föregående"><svg viewBox="0 0 8 12" className="h-3 w-2" fill="#c8c6c4"><path d="M8 0v12L0 6z" /></svg></button>
        <button aria-label="Nästa"><svg viewBox="0 0 8 12" className="h-3 w-2" fill="#c8c6c4"><path d="M0 0v12l8-6z" /></svg></button>
      </div>
      <button className="w-[108px] border-b-4 border-l border-b-[#e8cf4d] border-l-[#999] bg-white pt-1 text-[17px] leading-6 text-[#555]">Sida 1</button>
      <button aria-label="Ny sida" className="mt-[3px] mb-0.5 flex w-[59px] items-center justify-center bg-[#eccf4a]">
        <svg viewBox="0 0 16 16" className="h-4 w-4" stroke="#7c745a" strokeWidth="4"><path d="M8 0v16M0 8h16" /></svg>
      </button>
    </div>
  );
}

function Player() {
  return (
    <footer className="flex h-[90px] shrink-0 items-start bg-black pl-[416px]">
      <button aria-label="Spela upp" className="relative -mt-2.5 flex h-20 w-[130px] items-center justify-center rounded-[10px] bg-[#54837a]">
        <svg viewBox="0 0 38 40" className="ml-1.5 h-10 w-[38px]" fill="#fff"><path d="M0 0l38 20L0 40z" /></svg>
      </button>
      <div className="mt-1.5 ml-5 flex h-16 flex-1 items-center rounded bg-[#1a1a1a] pr-5 pl-5">
        <div className="relative flex h-6 flex-1">
          <input
            type="range"
            aria-label="Position"
            min={0}
            max={225}
            defaultValue={225}
            className="h-6 w-full appearance-none border-2 border-[#666] bg-[#54837a] bg-clip-content p-0.5 [&::-webkit-slider-thumb]:h-4 [&::-webkit-slider-thumb]:w-2 [&::-webkit-slider-thumb]:appearance-none [&::-webkit-slider-thumb]:bg-[#6b6b6b]"
          />
          <div className="absolute -top-[38px] -right-[26px] flex h-8 w-[76px] items-center justify-center bg-white pt-0.5 font-['DejaVu_Sans',sans-serif] text-[21px] leading-8 text-black">
            03:45
            <svg viewBox="0 0 12 6" className="absolute top-8 left-8 h-1.5 w-3" fill="#fff"><path d="M0 0h12L6 6z" /></svg>
          </div>
        </div>
        <button aria-label="Volym" className="ml-[22px] flex h-6 items-end gap-1">
          <i className="h-2 w-1.5 bg-[#54837a]" />
          <i className="h-3 w-1.5 bg-[#54837a]" />
          <i className="h-4 w-1.5 bg-[#54837a]" />
          <i className="h-5 w-1.5 bg-[#54837a]" />
          <i className="h-6 w-1.5 bg-[#54837a]" />
        </button>
        <button aria-label="Inställningar" className="ml-[22px]">
          <svg viewBox="0 0 32 32" className="h-8 w-8" fill="#fff" fillRule="evenodd">
            <path d="M13 0h6l1 5 3 2 5-2 3 6-4 3v4l4 3-3 6-5-2-3 2-1 5h-6l-1-5-3-2-5 2-3-6 4-3v-4l-4-3 3-6 5 2 3-2zM16 10.500a5.500 5.500 0 100 11 5.500 5.500 0 000-11z" />
          </svg>
        </button>
        <button aria-label="Avsluta helskärm" className="ml-[19px]">
          <svg viewBox="0 0 24 24" className="h-6 w-6" fill="#fff">
            <path d="M3 0l5 5 2-3v8H2l3-2-5-5zM21 0l-5 5-2-3v8h8l-3-2 5-5zM3 24l5-5 2 3v-8H2l3 2-5 5zM21 24l-5-5-2 3v-8h8l-3 2 5 5z" />
          </svg>
        </button>
      </div>
      <div className="mt-7 flex w-[416px] items-center pl-[196px]">
        <svg viewBox="0 0 56 43" className="h-[43px] w-14" fill="none" aria-hidden="true">
          <path d="M4 17L29 32v8L4 27z" fill="#cfd0d6" />
          <path d="M26 1q3-2 6 0l24 15-27 16L3 17z" fill="#54837a" />
          <path d="M4 16q-3 2-3 6 0 4 3 6l25 13 19-12" stroke="#54837a" strokeWidth="3" />
          <path d="M45 27l11-1-4 10z" fill="#54837a" />
        </svg>
        <span className="ml-2 font-['DejaVu_Sans',sans-serif] text-[26px] leading-8 text-[#50535a]">LEARNESY</span>
      </div>
    </footer>
  );
}

export default function App() {
  return (
    <div className="flex h-screen flex-col bg-black pt-[90px] font-['Open_Sans','Noto_Sans',sans-serif]">
      <TitleBar />
      <Ribbon />
      <div className="flex min-h-0 flex-1 border-t-2 border-[#ccd2e2] bg-[#f4f3f2]">
        <Rail />
        <div className="flex min-w-0 flex-1 flex-col">
          <div className="flex min-h-0 flex-1">
            <Canvas />
            <FilterPane />
          </div>
          <PageTabs />
        </div>
        <VizPane />
        <FieldsPane />
      </div>
      <div className="h-[33px] shrink-0 border-t-2 border-[#dcdad8] bg-[#f4f3f2] pl-2 text-base leading-[31px] text-[#555]">SIDAN 1 AV 1</div>
      <Player />
    </div>
  );
}
